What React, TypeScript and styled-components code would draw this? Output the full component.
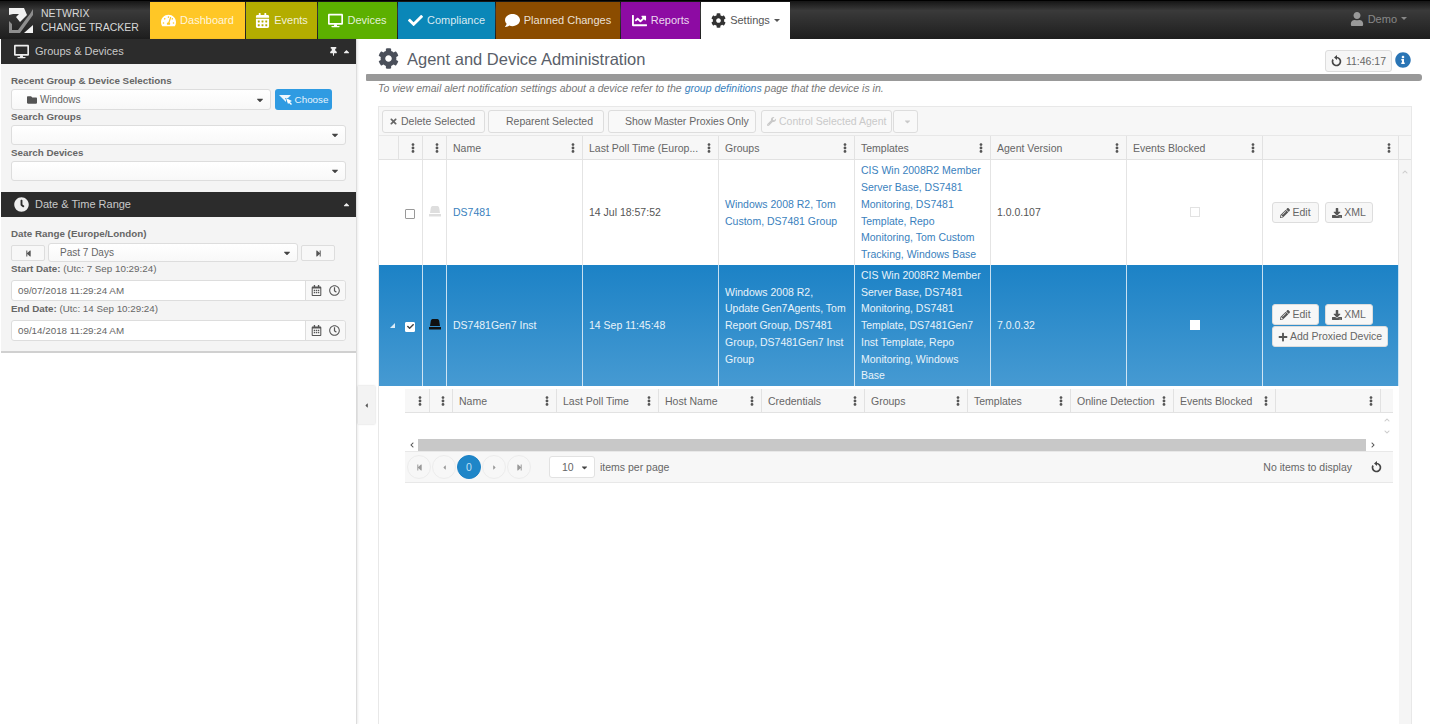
import React from "react";
import styled, { createGlobalStyle } from "styled-components";
import {
  FaTachometerAlt,
  FaCalendarAlt,
  FaDesktop,
  FaCheck,
  FaComment,
  FaChartLine,
  FaCog,
  FaUser,
  FaThumbtack,
  FaCaretUp,
  FaCaretDown,
  FaCaretLeft,
  FaCaretRight,
  FaClock,
  FaRegClock,
  FaRegCalendarAlt,
  FaFolder,
  FaStepBackward,
  FaStepForward,
  FaInfoCircle,
  FaTimes,
  FaWrench,
  FaEllipsisV,
  FaPencilAlt,
  FaDownload,
  FaPlus,
  FaChevronUp,
  FaChevronDown,
  FaChevronLeft,
  FaChevronRight,
} from "react-icons/fa";

const GlobalStyle = createGlobalStyle`
  html, body {
    margin: 0;
    height: 724px;
    overflow: hidden;
    background: #fff;
    font-family: "Liberation Sans", Arial, sans-serif;
    font-size: 11px;
    color: #555;
  }
  * { box-sizing: border-box; }
`;

const Page = styled.div`
  display: flex;
  flex-direction: column;
  height: 724px;
`;

/* top nav */
const Nav = styled.div`
  display: flex;
  height: 39px;
  flex: none;
  background: linear-gradient(#151515, #3a3a3a 25%, #1e1e1e);
  border-top: 1px solid #000;
  padding-top: 1px;
`;

const Brand = styled.div`
  width: 150px;
  flex: none;
  display: flex;
  align-items: center;
  gap: 7px;
  padding: 0 0 1px 7px;
`;

const BrandText = styled.div`
  color: #d8d8d8;
  font-size: 10.5px;
  line-height: 14.5px;
  white-space: nowrap;
`;

const Tab = styled.div<{ $bg: string; $w: number; $active?: boolean }>`
  width: ${(p) => p.$w}px;
  flex: none;
  margin-right: 1px;
  padding-bottom: 1px;
  background: ${(p) => p.$bg};
  color: ${(p) => (p.$active ? "#555" : "rgba(255,255,255,.85)")};
  display: flex;
  align-items: center;
  justify-content: center;
  gap: 4px;
  font-size: 11px;
  svg {
    font-size: 15px;
    color: ${(p) => (p.$active ? "#333" : "#fff")};
  }
`;

const Caret = styled.span`
  display: inline-block;
  width: 0;
  height: 0;
  border-left: 3px solid transparent;
  border-right: 3px solid transparent;
  border-top: 3px solid currentColor;
  vertical-align: middle;
`;

const UserMenu = styled.div`
  margin-left: auto;
  margin-right: 23px;
  display: flex;
  align-items: center;
  gap: 4px;
  color: #888;
  font-size: 11px;
  padding-bottom: 4px;
  svg {
    font-size: 14px;
    color: #999;
  }
`;

const Content = styled.div`
  flex: 1;
  min-height: 0;
  display: flex;
  position: relative;
`;

/* left side */
const Sidebar = styled.div`
  width: 357px;
  flex: none;
  border-right: 1px solid #ddd;
  box-shadow: 1px 0 2px rgba(0, 0, 0, 0.08);
  padding-left: 1px;
`;

const PanelHead = styled.div`
  height: 25px;
  background: #2c2c2c;
  display: flex;
  align-items: center;
  padding: 0 5px 1px 12px;
  gap: 6px;
  color: #c9c9c9;
  font-size: 11px;
  svg {
    color: #eee;
  }
`;

const PanelTitle = styled.span`
  flex: 1;
`;

const PanelIcon = styled.span`
  width: 16px;
  display: flex;
  justify-content: center;
  font-size: 15px;
`;

const PanelTools = styled.span`
  display: flex;
  align-items: center;
  gap: 4px;
  font-size: 9px;
`;

const PanelBody = styled.div<{ $h: number }>`
  height: ${(p) => p.$h}px;
  background: #f4f4f4;
  padding: 10px 10px 0 10px;
`;

const Label = styled.div<{ $mt?: number; $mb?: number }>`
  font-weight: bold;
  font-size: 9.8px;
  color: #666;
  line-height: 14px;
  margin-top: ${(p) => p.$mt ?? 0}px;
  margin-bottom: ${(p) => p.$mb ?? 1}px;
`;

const Normal = styled.span`
  font-weight: normal;
`;

const FieldRow = styled.div<{ $gap: number }>`
  display: flex;
  gap: ${(p) => p.$gap}px;
`;

const Select = styled.div<{ $w?: number; $h?: number; $pl?: number }>`
  ${(p) => (p.$w ? `width: ${p.$w}px;` : "flex: 1;")}
  height: ${(p) => p.$h ?? 20}px;
  background: linear-gradient(#fff, #f8f8f8);
  border: 1px solid #ddd;
  border-radius: 3px;
  display: flex;
  align-items: center;
  justify-content: space-between;
  padding: 0 5px 0 ${(p) => p.$pl ?? 15}px;
  font-size: 10px;
  color: #666;
  > svg {
    font-size: 10px;
    color: #444;
  }
`;

const SelectValue = styled.span`
  display: flex;
  align-items: center;
  gap: 3px;
  svg {
    font-size: 10px;
    color: #555;
  }
`;

const ChooseButton = styled.div`
  width: 57px;
  height: 21px;
  background: #2f9be2;
  border-radius: 3px;
  color: #e6f3fc;
  font-size: 9.8px;
  display: flex;
  align-items: center;
  justify-content: center;
  gap: 2px;
`;

const StepButton = styled.div`
  width: 34px;
  height: 16px;
  margin-top: 2px;
  border: 1px solid #ddd;
  border-radius: 2px;
  background: #f8f8f8;
  display: flex;
  align-items: center;
  justify-content: center;
  font-size: 7px;
  color: #555;
`;

const DateInput = styled.div`
  height: 21px;
  background: #fff;
  border: 1px solid #ddd;
  border-radius: 3px;
  display: flex;
  align-items: center;
  padding-left: 6px;
  font-size: 9.8px;
  color: #666;
`;

const DateText = styled.span`
  flex: 1;
`;

const DateAddon = styled.span`
  width: 40px;
  height: 100%;
  border-left: 1px solid #ddd;
  background: #f8f8f8;
  display: flex;
  align-items: center;
  justify-content: center;
  gap: 7px;
  font-size: 11px;
  color: #555;
  border-radius: 0 3px 3px 0;
`;

const PanelEnd = styled.div`
  height: 2px;
  background: #d0d0d0;
`;

const Handle = styled.div`
  position: absolute;
  left: 358px;
  top: 347px;
  width: 17px;
  height: 38px;
  background: #f3f3f3;
  box-shadow: 0 0 2px rgba(0, 0, 0, 0.2);
  display: flex;
  align-items: center;
  justify-content: center;
  font-size: 7px;
  color: #555;
`;

/* right side */
const Main = styled.div`
  flex: 1;
  min-width: 0;
  margin-left: 9px;
  padding-right: 8px;
  display: flex;
  flex-direction: column;
`;

const TitleRow = styled.div`
  height: 35px;
  flex: none;
  display: flex;
  align-items: center;
  padding: 3px 11px 0 12px;
`;

const TitleIcon = styled.span`
  font-size: 21px;
  display: flex;
  color: #4a4f5a;
  margin-right: 8px;
`;

const Title = styled.h1`
  flex: 1;
  margin: 2px 0 0;
  font-size: 16.5px;
  font-weight: 400;
  color: #5a5f6a;
`;

const ClockButton = styled.div`
  width: 67px;
  height: 22px;
  border: 1px solid #ddd;
  border-radius: 3px;
  background: #f6f6f6;
  display: flex;
  align-items: center;
  justify-content: center;
  gap: 4px;
  font-size: 10.5px;
  color: #666;
  margin-top: 6px;
`;

const InfoIcon = styled.span`
  display: flex;
  font-size: 16px;
  color: #2a75b5;
  margin-left: 3px;
  margin-top: 4px;
`;

const Bar = styled.div`
  height: 7px;
  flex: none;
  background: #999;
  border-radius: 1px 3px 3px 1px;
`;

const Note = styled.div`
  height: 25px;
  flex: none;
  padding-left: 12px;
  line-height: 14px;
  font-style: italic;
  font-size: 10.5px;
  color: #777;
`;

const Link = styled.span`
  color: #3a7fbd;
`;

const Grid = styled.div`
  flex: 1;
  min-height: 0;
  margin: 0 0 0 12px;
  width: 1034px;
  border: 1px solid #e8e8e8;
  border-bottom: none;
  display: flex;
  flex-direction: column;
`;

const Toolbar = styled.div`
  height: 29px;
  flex: none;
  background: #f7f7f7;
  border-bottom: 1px solid #e8e8e8;
  display: flex;
  align-items: center;
  padding: 0 0 0 3px;
`;

const ToolButton = styled.div<{ $w: number; $left: number; $ml?: number; $disabled?: boolean }>`
  width: ${(p) => p.$w}px;
  height: 23px;
  margin-left: ${(p) => p.$ml ?? 0}px;
  background: #f9f9f9;
  border: 1px solid #ddd;
  border-radius: 3px;
  display: flex;
  align-items: center;
  gap: 3px;
  padding-left: ${(p) => p.$left}px;
  font-size: 10.5px;
  color: ${(p) => (p.$disabled ? "#c9c9c9" : "#666")};
  white-space: nowrap;
  svg {
    font-size: 9px;
  }
`;

const HeaderRow = styled.div<{ $cols: string; $h: number }>`
  display: grid;
  grid-template-columns: ${(p) => p.$cols};
  height: ${(p) => p.$h}px;
  flex: none;
  background: #f7f7f7;
  border-bottom: 1px solid #e2e2e2;
`;

const HeadCell = styled.div`
  display: flex;
  align-items: center;
  justify-content: space-between;
  padding: 0 4px 0 6px;
  border-right: 1px solid #e2e2e2;
  font-size: 10.5px;
  color: #666;
  white-space: nowrap;
  overflow: hidden;
  svg {
    flex: none;
    font-size: 10px;
    color: #555;
  }
`;

const BlankHead = styled.div`
  background: #f7f7f7;
`;

const GridBody = styled.div`
  flex: 1;
  min-height: 0;
  display: flex;
`;

const Rows = styled.div`
  width: 1020px;
  flex: none;
  display: flex;
  flex-direction: column;
`;

const ScrollCol = styled.div`
  flex: 1;
  background: #f5f5f5;
  display: flex;
  flex-direction: column;
  align-items: center;
  padding-top: 9px;
  font-size: 6px;
  color: #ccc;
  gap: 6px;
`;

const Row = styled.div<{ $selected?: boolean; $h: number }>`
  display: grid;
  grid-template-columns: 44px 24px repeat(7, 136px);
  height: ${(p) => p.$h}px;
  flex: none;
  background: ${(p) => (p.$selected ? "linear-gradient(#1c82c6, #469ad2)" : "#fff")};
  color: ${(p) => (p.$selected ? "#e8f3fa" : "#555")};
  --line: ${(p) => (p.$selected ? "rgba(255,255,255,.75)" : "#e4e4e4")};
  --link: ${(p) => (p.$selected ? "#e8f3fa" : "#3a7fbd")};
`;

const Cell = styled.div<{ $link?: boolean }>`
  display: flex;
  align-items: center;
  padding: 0 6px;
  border-right: 1px solid var(--line);
  font-size: 10.5px;
  line-height: 16.7px;
  color: ${(p) => (p.$link ? "var(--link)" : "inherit")};
`;

const CheckCell = styled(Cell)`
  justify-content: flex-end;
  padding: 0 7px 0 0;
  gap: 10px;
`;

const CenterCell = styled(Cell)`
  justify-content: center;
  padding: 0 0 3px 0;
`;

const Expander = styled.span`
  width: 0;
  height: 0;
  border-bottom: 5px solid #dcecf7;
  border-left: 5px solid transparent;
`;

const CheckBox = styled.span<{ $checked?: boolean }>`
  width: 10px;
  height: 10px;
  background: #fff;
  border: 1px solid ${(p) => (p.$checked ? "#fff" : "#999")};
  border-radius: 1px;
  display: flex;
  align-items: center;
  justify-content: center;
  font-size: 7px;
  color: #444;
  margin-top: 2px;
`;

const BlockedBox = styled.span<{ $on?: boolean }>`
  width: 10px;
  height: 10px;
  background: #fff;
  border: 1px solid ${(p) => (p.$on ? "#fff" : "#e2e2e2")};
  margin-top: 2px;
`;

const Actions = styled.div`
  display: flex;
  flex-wrap: wrap;
  gap: 1px 6px;
  padding-left: 3px;
`;

const ActionButton = styled.div<{ $w: number }>`
  width: ${(p) => p.$w}px;
  height: 21px;
  background: #f7f7f7;
  border: 1px solid #ddd;
  border-radius: 3px;
  display: flex;
  align-items: center;
  justify-content: center;
  gap: 2px;
  font-size: 10.5px;
  color: #666;
  svg {
    font-size: 10px;
    color: #555;
  }
`;

const Detail = styled.div`
  height: 97px;
  flex: none;
  padding: 3px 6px 0 26px;
`;

const DetailBody = styled.div`
  height: 26px;
  display: flex;
  justify-content: flex-end;
  background: #fff;
`;

const MiniScroll = styled.div`
  width: 12px;
  height: 25px;
  display: flex;
  flex-direction: column;
  align-items: center;
  justify-content: center;
  gap: 6px;
  font-size: 6px;
  color: #ccc;
`;

const HScroll = styled.div`
  height: 12px;
  display: flex;
  align-items: center;
  font-size: 6px;
  color: #555;
`;

const HArrow = styled.span`
  width: 13px;
  display: flex;
  justify-content: center;
`;

const HThumb = styled.div`
  width: 948px;
  height: 12px;
  background: #c8c8c8;
`;

const Pager = styled.div`
  height: 32px;
  background: #f7f7f7;
  border-top: 1px solid #e8e8e8;
  border-bottom: 1px solid #e8e8e8;
  display: flex;
  align-items: center;
  padding: 0 11px 0 2px;
`;

const PageButton = styled.div<{ $active?: boolean }>`
  width: 24px;
  height: 24px;
  margin-right: 1px;
  border-radius: 50%;
  display: flex;
  align-items: center;
  justify-content: center;
  font-size: 7px;
  border: 1px solid ${(p) => (p.$active ? "#1c82c6" : "#ececec")};
  background: ${(p) => (p.$active ? "#1f86c8" : "transparent")};
  color: ${(p) => (p.$active ? "#bfe0f5" : "#999")};
  ${(p) => p.$active && "font-size: 10.5px;"}
`;

const PageSize = styled.div`
  width: 46px;
  height: 22px;
  margin-left: 17px;
  background: #fff;
  border: 1px solid #e2e2e2;
  border-radius: 3px;
  display: flex;
  align-items: center;
  justify-content: space-between;
  padding: 0 5px 0 12px;
  font-size: 10.5px;
  color: #666;
  svg {
    font-size: 9px;
    color: #444;
  }
`;

const PagerText = styled.span`
  margin-left: 5px;
  font-size: 10.5px;
  color: #666;
`;

const PagerEnd = styled.span`
  margin-left: auto;
  font-size: 10.5px;
  color: #666;
`;

const PagerRefresh = styled.span`
  display: flex;
  margin-left: 19px;
`;

const LogoMark = () => (
  <svg width="27" height="27" viewBox="0 0 27 27">
    <path d="M2 1h15l3 7-7 7-4-5 3-3H6l-4 1z" fill="#f2f2f2" />
    <path d="M26 2v6L13 26H2V14l3 3v6h6l8-11 4-5z" fill="#8e8e8e" />
    <path d="M26 18v8h-9z" fill="#f2f2f2" />
  </svg>
);

const ChooseIcon = () => (
  <svg width="14" height="11" viewBox="0 0 14 11">
    <path d="M0 1h12L9 4H6l1 2v2L4 5z" fill="#eef7fd" />
    <path d="M7 4l6 3-2 1 2 2-1 1-2-2-1 1z" fill="#fff" />
  </svg>
);

const HatIcon = ({ color }: { color: string }) => (
  <svg width="12" height="11" viewBox="0 0 12 11">
    <path d="M3.500 0h5c1 0 1.500 1 1.700 2L11 7H1l.8-5C2 1 2.500 0 3.500 0z" fill={color} />
    <path d="M0 8h12v2.500H0z" fill={color} />
  </svg>
);

const RefreshIcon = () => (
  <svg width="11" height="12" viewBox="0 0 11 12">
    <path d="M5.500 2.500A4 4 0 1 1 2 4.500" fill="none" stroke="#444" strokeWidth="1.700" />
    <path d="M6 0v5L3 2.500z" fill="#444" />
  </svg>
);

const mainCols = "20px 24px 24px repeat(7, 136px) 1fr";
const subCols = "25px 23px 104px 102px 103px 103px 103px 103px 103px 102px 105px 12px";

const mainHeads = ["Name", "Last Poll Time (Europ...", "Groups", "Templates", "Agent Version", "Events Blocked", ""];
const subHeads = ["", "", "Name", "Last Poll Time", "Host Name", "Credentials", "Groups", "Templates", "Online Detection", "Events Blocked", ""];

const App: React.FC = () => {
  return (
    <Page>
      <GlobalStyle />
      <Nav>
        <Brand>
          <LogoMark />
          <BrandText>
            NETWRIX
            <br />
            CHANGE TRACKER
          </BrandText>
        </Brand>
        <Tab $bg="#ffc726" $w={95}><FaTachometerAlt />Dashboard</Tab>
        <Tab $bg="#b3ad00" $w={71}><FaCalendarAlt />Events</Tab>
        <Tab $bg="#5cb000" $w={79}><FaDesktop />Devices</Tab>
        <Tab $bg="#0a87b8" $w={97}><FaCheck />Compliance</Tab>
        <Tab $bg="#8b4c00" $w={124}><FaComment />Planned Changes</Tab>
        <Tab $bg="#8d0ba3" $w={79}><FaChartLine />Reports</Tab>
        <Tab $bg="#fff" $w={89} $active><FaCog />Settings<Caret /></Tab>
        <UserMenu><FaUser />Demo<Caret /></UserMenu>
      </Nav>
      <Content>
        <Sidebar>
          <PanelHead>
            <PanelIcon><FaDesktop /></PanelIcon>
            <PanelTitle>Groups &amp; Devices</PanelTitle>
            <PanelTools><FaThumbtack /><FaCaretUp /></PanelTools>
          </PanelHead>
          <PanelBody $h={128}>
            <Label>Recent Group &amp; Device Selections</Label>
            <FieldRow $gap={4}>
              <Select $w={260} $h={21}>
                <SelectValue><FaFolder />Windows</SelectValue>
                <FaCaretDown />
              </Select>
              <ChooseButton><ChooseIcon />Choose</ChooseButton>
            </FieldRow>
            <Label>Search Groups</Label>
            <Select><span /><FaCaretDown /></Select>
            <Label $mt={1}>Search Devices</Label>
            <Select><span /><FaCaretDown /></Select>
          </PanelBody>
          <PanelHead>
            <PanelIcon><FaClock /></PanelIcon>
            <PanelTitle>Date &amp; Time Range</PanelTitle>
            <PanelTools><FaCaretUp /></PanelTools>
          </PanelHead>
          <PanelBody $h={134}>
            <Label $mb={2}>Date Range (Europe/London)</Label>
            <FieldRow $gap={3}>
              <StepButton><FaStepBackward /></StepButton>
              <Select $w={250} $h={19} $pl={11}>
                <SelectValue>Past 7 Days</SelectValue>
                <FaCaretDown />
              </Select>
              <StepButton><FaStepForward /></StepButton>
            </FieldRow>
            <Label $mb={4}>Start Date: <Normal>(Utc: 7 Sep 10:29:24)</Normal></Label>
            <DateInput>
              <DateText>09/07/2018 11:29:24 AM</DateText>
              <DateAddon><FaRegCalendarAlt /><FaRegClock /></DateAddon>
            </DateInput>
            <Label $mt={1} $mb={4}>End Date: <Normal>(Utc: 14 Sep 10:29:24)</Normal></Label>
            <DateInput>
              <DateText>09/14/2018 11:29:24 AM</DateText>
              <DateAddon><FaRegCalendarAlt /><FaRegClock /></DateAddon>
            </DateInput>
          </PanelBody>
          <PanelEnd />
        </Sidebar>
        <Handle><FaCaretLeft /></Handle>
        <Main>
          <TitleRow>
            <TitleIcon><FaCog /></TitleIcon>
            <Title>Agent and Device Administration</Title>
            <ClockButton><RefreshIcon />11:46:17</ClockButton>
            <InfoIcon><FaInfoCircle /></InfoIcon>
          </TitleRow>
          <Bar />
          <Note>
            To view email alert notification settings about a device refer to the <Link>group definitions</Link> page that the device is in.
          </Note>
          <Grid>
            <Toolbar>
              <ToolButton $w={103} $left={6}><FaTimes />Delete Selected</ToolButton>
              <ToolButton $w={116} $left={17} $ml={3}>Reparent Selected</ToolButton>
              <ToolButton $w={148} $left={16} $ml={4}>Show Master Proxies Only</ToolButton>
              <ToolButton $w={131} $left={5} $ml={5} $disabled><FaWrench />Control Selected Agent</ToolButton>
              <ToolButton $w={25} $left={9} $ml={1} $disabled><FaCaretDown /></ToolButton>
            </Toolbar>
            <HeaderRow $cols={mainCols} $h={24}>
              <HeadCell />
              <HeadCell><span /><FaEllipsisV /></HeadCell>
              <HeadCell><span /><FaEllipsisV /></HeadCell>
              {mainHeads.map((h, i) => (
                <HeadCell key={i}>{h || <span />}<FaEllipsisV /></HeadCell>
              ))}
              <BlankHead />
            </HeaderRow>
            <GridBody>
              <Rows>
                <Row $h={105}>
                  <CheckCell><CheckBox /></CheckCell>
                  <CenterCell><HatIcon color="#dedede" /></CenterCell>
                  <Cell $link>DS7481</Cell>
                  <Cell>14 Jul 18:57:52</Cell>
                  <Cell $link>Windows 2008 R2, Tom Custom, DS7481 Group</Cell>
                  <Cell $link>CIS Win 2008R2 Member Server Base, DS7481 Monitoring, DS7481 Template, Repo Monitoring, Tom Custom Tracking, Windows Base</Cell>
                  <Cell>1.0.0.107</Cell>
                  <CenterCell><BlockedBox /></CenterCell>
                  <Cell>
                    <Actions>
                      <ActionButton $w={47}><FaPencilAlt />Edit</ActionButton>
                      <ActionButton $w={48}><FaDownload />XML</ActionButton>
                    </Actions>
                  </Cell>
                </Row>
                <Row $h={121} $selected>
                  <CheckCell>
                    <Expander />
                    <CheckBox $checked><FaCheck /></CheckBox>
                  </CheckCell>
                  <CenterCell><HatIcon color="#111" /></CenterCell>
                  <Cell>DS7481Gen7 Inst</Cell>
                  <Cell>14 Sep 11:45:48</Cell>
                  <Cell>Windows 2008 R2, Update Gen7Agents, Tom Report Group, DS7481 Group, DS7481Gen7 Inst Group</Cell>
                  <Cell>CIS Win 2008R2 Member Server Base, DS7481 Monitoring, DS7481 Template, DS7481Gen7 Inst Template, Repo Monitoring, Windows Base</Cell>
                  <Cell>7.0.0.32</Cell>
                  <CenterCell><BlockedBox $on /></CenterCell>
                  <Cell>
                    <Actions>
                      <ActionButton $w={47}><FaPencilAlt />Edit</ActionButton>
                      <ActionButton $w={48}><FaDownload />XML</ActionButton>
                      <ActionButton $w={116}><FaPlus />Add Proxied Device</ActionButton>
                    </Actions>
                  </Cell>
                </Row>
                <Detail>
                  <HeaderRow $cols={subCols} $h={24}>
                    {subHeads.map((h, i) => (
                      <HeadCell key={i}>{h || <span />}<FaEllipsisV /></HeadCell>
                    ))}
                    <BlankHead />
                  </HeaderRow>
                  <DetailBody>
                    <MiniScroll><FaChevronUp /><FaChevronDown /></MiniScroll>
                  </DetailBody>
                  <HScroll>
                    <HArrow><FaChevronLeft /></HArrow>
                    <HThumb />
                    <HArrow><FaChevronRight /></HArrow>
                  </HScroll>
                  <Pager>
                    <PageButton><FaStepBackward /></PageButton>
                    <PageButton><FaCaretLeft /></PageButton>
                    <PageButton $active>0</PageButton>
                    <PageButton><FaCaretRight /></PageButton>
                    <PageButton><FaStepForward /></PageButton>
                    <PageSize>10<FaCaretDown /></PageSize>
                    <PagerText>items per page</PagerText>
                    <PagerEnd>No items to display</PagerEnd>
                    <PagerRefresh><RefreshIcon /></PagerRefresh>
                  </Pager>
                </Detail>
              </Rows>
              <ScrollCol><FaChevronUp /></ScrollCol>
            </GridBody>
          </Grid>
        </Main>
      </Content>
    </Page>
  );
};

export default App;
